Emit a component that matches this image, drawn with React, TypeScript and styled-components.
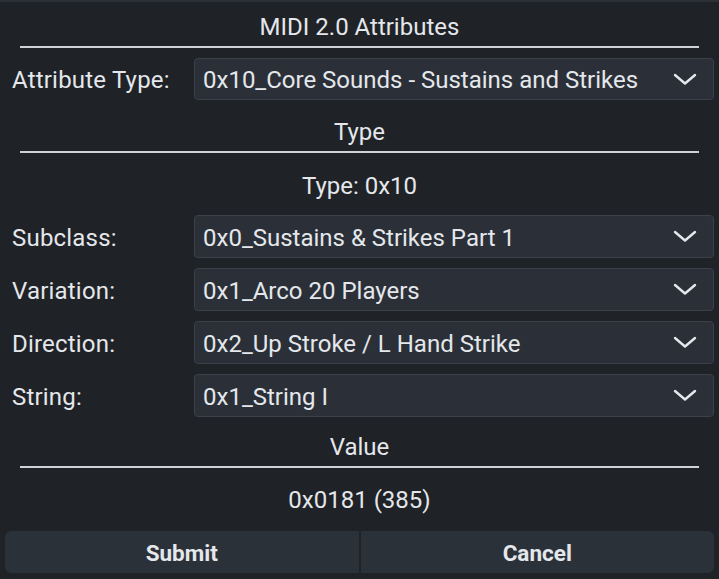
import React from "react";
import styled, { createGlobalStyle } from "styled-components";

const Global = createGlobalStyle`
  html, body { margin: 0; padding: 0; background: #1f2226; }
  * { box-sizing: border-box; }
`;

const Page = styled.div`
  width: 719px;
  height: 579px;
  background: #1f2226;
  display: flex;
  flex-direction: column;
  padding: 0 5px;
  font-family: Roboto, "Liberation Sans", sans-serif;
  color: #e4e7eb;
  font-size: 24px;
  overflow: hidden;
`;

const TopStrip = styled.div`
  height: 2px;
  margin: 0 -5px 9px;
  background: #2b2f36;
`;

const Heading = styled.div<{ $top?: number }>`
  height: 30px;
  line-height: 32px;
  text-align: center;
  margin-top: ${(p) => p.$top ?? 0}px;
`;

const Divider = styled.div`
  height: 2px;
  margin: 5px 15px 0;
  background: #cfd2d6;
`;

const Info = styled.div<{ $top: number }>`
  height: 30px;
  line-height: 32px;
  text-align: center;
  margin-top: ${(p) => p.$top}px;
`;

const Rows = styled.div<{ $top: number }>`
  display: flex;
  flex-direction: column;
  gap: 10px;
  margin-top: ${(p) => p.$top}px;
`;

const Row = styled.div<{ $h: number }>`
  display: grid;
  grid-template-columns: 189px 1fr;
  align-items: center;
  height: ${(p) => p.$h}px;
`;

const Label = styled.div`
  padding: 2px 0 0 7px;
  white-space: nowrap;
  letter-spacing: 0.2px;
`;

const Select = styled.div`
  height: 100%;
  display: flex;
  align-items: center;
  justify-content: space-between;
  background: #2b3038;
  border: 1px solid #3b4049;
  border-radius: 4px;
  padding: 2px 16px 0 8px;
  white-space: nowrap;
`;

const Chevron = () => (
  <svg width="24" height="13" viewBox="0 0 24 13" fill="none" style={{ marginTop: -2 }}>
    <path d="M2 2 L12 10.5 L22 2" stroke="#e4e7eb" strokeWidth="2.4" strokeLinecap="round" strokeLinejoin="round" />
  </svg>
);

const Buttons = styled.div`
  display: grid;
  grid-template-columns: 1fr 1fr;
  gap: 2px;
  margin-top: 17px;
  height: 42px;
`;

const Button = styled.div<{ $side: "left" | "right" }>`
  background: #2b3139;
  display: flex;
  align-items: center;
  justify-content: center;
  font-weight: 700;
  font-size: 22.5px;
  padding-top: 1px;
  border-radius: ${(p) => (p.$side === "left" ? "6px 0 0 6px" : "0 6px 6px 0")};
`;

const Field = ({ label, value, h = 43 }: { label: string; value: string; h?: number }) => (
  <Row $h={h}>
    <Label>{label}</Label>
    <Select>
      <span>{value}</span>
      <Chevron />
    </Select>
  </Row>
);

export default function App() {
  return (
    <>
      <Global />
      <Page>
        <TopStrip />
        <Heading>MIDI 2.0 Attributes</Heading>
        <Divider />
        <Rows $top={10}>
          <Field label="Attribute Type:" value="0x10_Core Sounds - Sustains and Strikes" h={42} />
        </Rows>
        <Heading $top={16}>Type</Heading>
        <Divider />
        <Info $top={17}>Type: 0x10</Info>
        <Rows $top={15}>
          <Field label="Subclass:" value="0x0_Sustains & Strikes Part 1" />
          <Field label="Variation:" value="0x1_Arco 20 Players" />
          <Field label="Direction:" value="0x2_Up Stroke / L Hand Strike" />
          <Field label="String:" value="0x1_String I" />
        </Rows>
        <Heading $top={14}>Value</Heading>
        <Divider />
        <Info $top={16}>0x0181 (385)</Info>
        <Buttons>
          <Button $side="left">Submit</Button>
          <Button $side="right">Cancel</Button>
        </Buttons>
      </Page>
    </>
  );
}
